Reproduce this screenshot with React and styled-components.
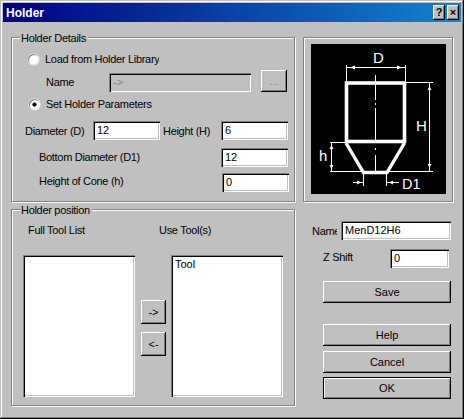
import React from "react";
import styled, { createGlobalStyle } from "styled-components";

const Global = createGlobalStyle`
  html, body { margin: 0; padding: 0; background: #c0c0c0; }
  * { box-sizing: border-box; }
`;

const Win = styled.div`
  width: 464px;
  height: 419px;
  padding: 3px;
  background: #c0c0c0;
  font-family: "Liberation Sans", Arial, sans-serif;
  font-size: 11px;
  color: #000;
  box-shadow: inset -1px -1px 0 #000, inset 1px 1px 0 #c0c0c0, inset -2px -2px 0 #808080, inset 2px 2px 0 #fff;
  overflow: hidden;
`;

const TitleBar = styled.div`
  height: 19px;
  display: flex;
  align-items: center;
  justify-content: space-between;
  padding: 0 2px 0 3px;
  background: linear-gradient(90deg, #000080, #1084d0);
  color: #fff;
  font-weight: 700;
  font-size: 12px;
`;

const TitleButtons = styled.div`
  display: flex;
  gap: 2px;
`;

const TitleButton = styled.div`
  width: 12px;
  height: 15px;
  display: flex;
  align-items: center;
  justify-content: center;
  background: #c0c0c0;
  color: #000;
  font-size: 11px;
  font-weight: 700;
  line-height: 1;
  box-shadow: inset -1px -1px 0 #000, inset 1px 1px 0 #fff, inset -2px -2px 0 #808080;
`;

const Main = styled.div`
  display: grid;
  grid-template-columns: 284px 150px;
  grid-template-rows: 165px 197px;
  column-gap: 8px;
  row-gap: 7px;
  padding: 15px 0 0 8px;
`;

const Group = styled.div`
  position: relative;
  border: 1px solid #808080;
  box-shadow: 1px 1px 0 #fff, inset 1px 1px 0 #fff;
  display: flex;
  flex-direction: column;
`;

const Legend = styled.span`
  position: absolute;
  left: 8px;
  top: -6px;
  padding: 0 2px 0 1px;
  background: #c0c0c0;
  line-height: 13px;
  letter-spacing: -0.3px;
`;

const Row = styled.div`
  display: flex;
  flex: none;
  align-items: ${(p) => p.$align || "center"};
  margin-top: ${(p) => p.$top || 0}px;
  margin-left: ${(p) => p.$left || 0}px;
  height: ${(p) => p.$h || 19}px;
`;

const Radio = styled.span`
  width: 11px;
  height: 11px;
  flex: none;
  border-radius: 50%;
  background: ${(p) => (p.$on ? "radial-gradient(circle, #000 0 1.8px, #fff 2.4px)" : "#fff")};
  box-shadow: inset 1px 1px 0 #808080, inset -1px -1px 0 #e8e8e8, 0 0 0 0.5px #fff;
  margin-right: 6px;
`;

const Label = styled.span`
  flex: none;
  width: ${(p) => (p.$w ? `${p.$w}px` : "auto")};
  margin-bottom: ${(p) => p.$lift || 0}px;
  white-space: nowrap;
  overflow: hidden;
  line-height: 14px;
  letter-spacing: -0.3px;
`;

const Sunken = styled.div`
  flex: none;
  background: ${(p) => (p.$off ? "#c0c0c0" : "#fff")};
  color: ${(p) => (p.$off ? "#808080" : "#000")};
  width: ${(p) => p.$w}px;
  height: ${(p) => p.$hh || 19}px;
  padding: 3px 0 0 4px;
  line-height: 13px;
  box-shadow: inset 1px 1px 0 #808080, inset 2px 2px 0 #000, inset -1px -1px 0 #fff, inset -2px -2px 0 #c0c0c0;
`;

const Button = styled.div`
  flex: none;
  width: ${(p) => p.$w}px;
  height: ${(p) => p.$hh}px;
  margin-top: ${(p) => p.$top || 0}px;
  display: flex;
  align-items: center;
  justify-content: center;
  background: #c0c0c0;
  box-shadow: ${(p) =>
    p.$def
      ? "inset 0 0 0 1px #000, inset 2px 2px 0 #fff, inset -2px -2px 0 #808080"
      : "inset -1px -1px 0 #000, inset 1px 1px 0 #fff, inset -2px -2px 0 #808080"};
  color: ${(p) => (p.$dim ? "#808080" : "#000")};
`;

const Spacer = styled.span`
  flex: none;
  width: ${(p) => p.$w}px;
`;

const Frame = styled.div`
  border: 1px solid #808080;
  box-shadow: 1px 1px 0 #fff, inset 1px 1px 0 #fff;
  padding: 6px 6px 7px 7px;
`;

const Diagram = styled.svg`
  display: block;
  width: 135px;
  height: 150px;
  background: #000;
  font-family: "Liberation Sans", Arial, sans-serif;
`;

const Columns = styled.div`
  display: flex;
  margin: 18px 0 0 11px;
  align-items: center;
`;

const ArrowColumn = styled.div`
  display: flex;
  flex-direction: column;
  gap: 8px;
  margin: 4px 5px 0 6px;
`;

const Side = styled.div`
  display: flex;
  flex-direction: column;
`;

const ButtonStack = styled(Side)`
  margin-left: 20px;
`;

const Line = ({ x1, y1, x2, y2, w = 1 }) => (
  <line x1={x1} y1={y1} x2={x2} y2={y2} stroke="#fff" strokeWidth={w} />
);

const Arrow = ({ points }) => <polygon points={points} fill="#fff" />;

const HolderDiagram = () => (
  <Diagram viewBox="0 0 135 150">
    <rect x="35.5" y="39" width="58" height="58.5" fill="none" stroke="#fff" strokeWidth="3.6" />
    <path d="M35 99 L52.5 128.5 H76 L93.5 99" fill="none" stroke="#fff" strokeWidth="3.4" />
    <Line x1="64.5" y1="31" x2="64.5" y2="56" />
    <Line x1="64.5" y1="59" x2="64.5" y2="61" />
    <Line x1="64.5" y1="64" x2="64.5" y2="96" />
    <Line x1="64.5" y1="104" x2="64.5" y2="106" />
    <Line x1="64.5" y1="111" x2="64.5" y2="127" />
    <Line x1="35.5" y1="21" x2="35.5" y2="37" />
    <Line x1="94.5" y1="21" x2="94.5" y2="37" />
    <Line x1="35.5" y1="23.5" x2="94.5" y2="23.5" />
    <Arrow points="39,23.5 44,21.5 44,25.5" />
    <Arrow points="91,23.5 86,21.5 86,25.5" />
    <Line x1="95" y1="38.5" x2="122" y2="38.5" />
    <Line x1="118.5" y1="38.5" x2="118.5" y2="127" />
    <Arrow points="118.5,42 116.5,46 120.5,46" />
    <Arrow points="118.5,124 116.5,120 120.5,120" />
    <Line x1="19" y1="98.5" x2="34" y2="98.5" />
    <Line x1="20.5" y1="98.5" x2="20.5" y2="127" />
    <Arrow points="20.5,101 18.5,105 22.5,105" />
    <Arrow points="20.5,125 18.5,121 22.5,121" />
    <Line x1="19" y1="127.5" x2="122" y2="127.5" />
    <Line x1="52.5" y1="130" x2="52.5" y2="142" />
    <Line x1="75.5" y1="130" x2="75.5" y2="142" />
    <Line x1="42" y1="138.5" x2="52" y2="138.5" />
    <Line x1="76" y1="138.5" x2="88" y2="138.5" />
    <Arrow points="50,138.5 46,136.5 46,140.5" />
    <Arrow points="78,138.5 82,136.5 82,140.5" />
    <text x="62" y="19" fontSize="15" fill="#fff">D</text>
    <text x="105" y="87" fontSize="15" fill="#fff">H</text>
    <text x="8" y="117" fontSize="15" fill="#fff">h</text>
    <text x="91" y="145" fontSize="14.5" fill="#fff">D1</text>
  </Diagram>
);

export default function App() {
  return (
    <Win>
      <Global />
      <TitleBar>
        <span>Holder</span>
        <TitleButtons>
          <TitleButton>?</TitleButton>
          <TitleButton>×</TitleButton>
        </TitleButtons>
      </TitleBar>
      <Main>
        <Group>
          <Legend>Holder Details</Legend>
          <Row $top={14} $left={16} $h={14}>
            <Radio />
            <Label>Load from Holder Library</Label>
          </Row>
          <Row $top={4} $left={34} $h={22} $align="flex-end">
            <Label $w={63} $lift={3}>Name</Label>
            <Sunken $off $w={142}>-&gt;</Sunken>
            <Spacer $w={10} />
            <Button $dim $w={26} $hh={22}>...</Button>
          </Row>
          <Row $top={5} $left={17} $h={14}>
            <Radio $on />
            <Label>Set Holder Parameters</Label>
          </Row>
          <Row $top={10} $left={13}>
            <Label $w={68}>Diameter (D)</Label>
            <Sunken $w={67}>12</Sunken>
            <Spacer $w={3} />
            <Label $w={58}>Height (H)</Label>
            <Sunken $w={67}>6</Sunken>
          </Row>
          <Row $top={8} $left={27}>
            <Label $w={182} $lift={2}>Bottom Diameter (D1)</Label>
            <Sunken $w={67}>12</Sunken>
          </Row>
          <Row $top={6} $left={27}>
            <Label $w={183} $lift={4}>Height of Cone (h)</Label>
            <Sunken $w={67}>0</Sunken>
          </Row>
        </Group>

        <Frame>
          <HolderDiagram />
        </Frame>

        <Group>
          <Legend>Holder position</Legend>
          <Row $top={13} $left={16} $h={14}>
            <Label $w={131}>Full Tool List</Label>
            <Label>Use Tool(s)</Label>
          </Row>
          <Columns>
            <Sunken $w={112} $hh={142} />
            <ArrowColumn>
              <Button $w={25} $hh={24}>-&gt;</Button>
              <Button $w={25} $hh={24}>&lt;-</Button>
            </ArrowColumn>
            <Sunken $w={112} $hh={142}>Tool</Sunken>
          </Columns>
        </Group>

        <Side>
          <Row $top={12} $left={9}>
            <Label $w={25}>Name</Label>
            <Spacer $w={4} />
            <Sunken $w={110}>MenD12H6</Sunken>
          </Row>
          <Row $top={9} $left={20}>
            <Label $w={67} $lift={4}>Z Shift</Label>
            <Sunken $w={59}>0</Sunken>
          </Row>
          <ButtonStack>
            <Button $w={128} $hh={22} $top={13}>Save</Button>
            <Button $w={128} $hh={22} $top={21}>Help</Button>
            <Button $w={128} $hh={22} $top={5}>Cancel</Button>
            <Button $w={128} $hh={22} $top={4} $def>OK</Button>
          </ButtonStack>
        </Side>
      </Main>
    </Win>
  );
}
